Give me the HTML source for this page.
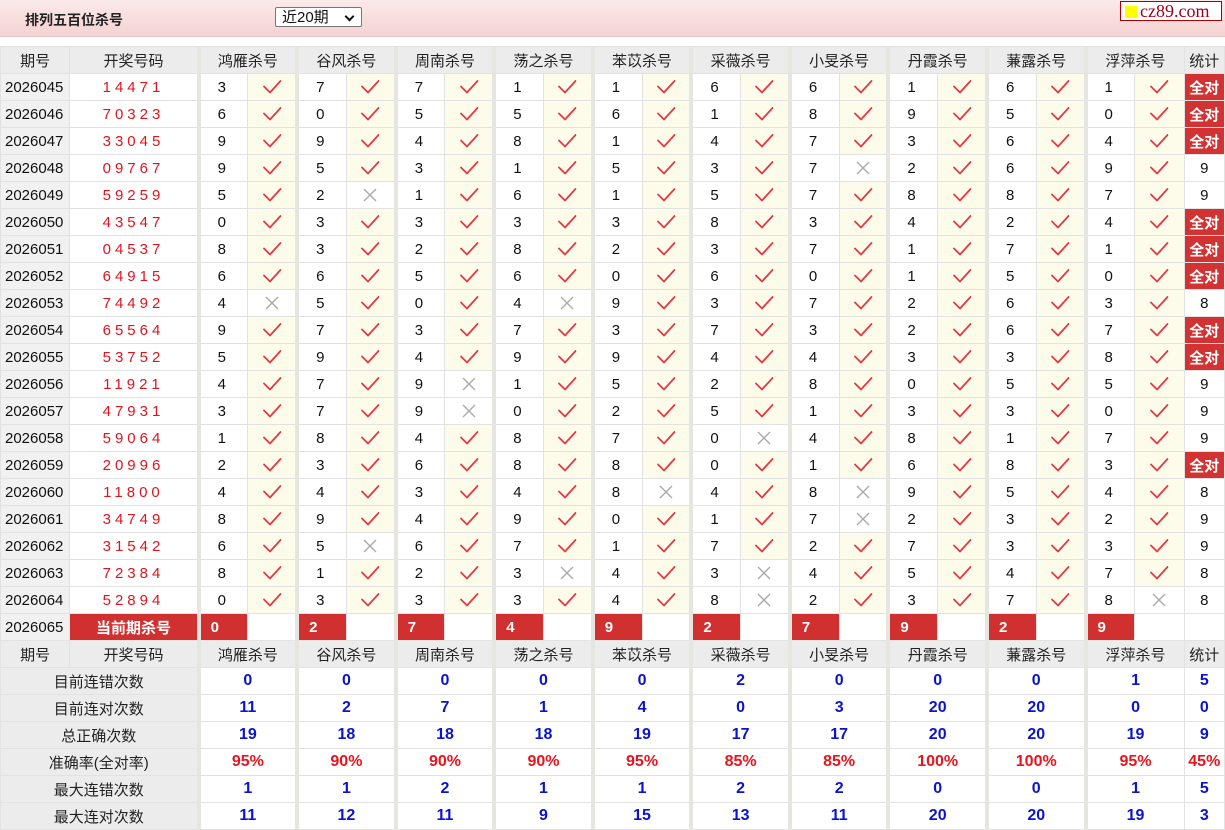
<!DOCTYPE html><html><head><meta charset="utf-8"><style>
body{margin:0;width:1225px;height:829px;overflow:hidden;background:#fff;font-family:"Liberation Sans","Noto Sans CJK SC",sans-serif;}
.top{position:absolute;left:0;top:0;width:1225px;height:36px;background:linear-gradient(#fbeaea,#f5d2d2);border-bottom:1px solid #e8c8c8;}
.title{position:absolute;left:25px;top:10px;font-size:14px;font-weight:bold;color:#222;}
.sel{position:absolute;left:275px;top:7px;width:87px;height:20px;border:1px solid #777;border-radius:2px;background:#fff;font-size:15px;line-height:20px;padding-left:6px;box-sizing:border-box;color:#111;}
.sel:after{content:"";position:absolute;right:8px;top:5px;width:5px;height:5px;border-right:2px solid #111;border-bottom:2px solid #111;transform:rotate(45deg);}
.logo{position:absolute;left:1120px;top:1px;width:102px;height:20px;border:1px solid #a00;background:#fff;box-sizing:border-box;font-family:"Liberation Serif",serif;font-size:18px;line-height:18px;color:#a00020;white-space:nowrap;overflow:hidden;}
.logo i{display:inline-block;width:12px;height:12px;background:#ff0;margin:0 3px 0 4px;vertical-align:-1px;}
table{position:absolute;left:0;top:46px;width:1225px;border-collapse:collapse;table-layout:fixed;}
td{height:26px;padding:0;border:1px solid #e2e2e2;text-align:center;font-size:15px;color:#111;white-space:nowrap;overflow:hidden;}
.h td{background:#ececec;color:#222;}
td.p{background:#f1f1f1;text-align:left;padding-left:4px;}
td.k{color:#e0141e;letter-spacing:4px;font-size:15px;}
td.n{border-left:4px solid #e6e6e0;text-align:left;padding-left:17px;}
.h td.n{text-align:center;padding-left:0;}
td.y{background:#fdfbea;}
td.w{background:#fff;}
svg{width:22px;height:18px;vertical-align:middle;}
td.q{background:#d23232;color:#fff;font-weight:bold;font-size:15px;}
td.c{background:#d03030;color:#fff;font-weight:bold;font-size:15px;}
td.cn{background:#d03030;color:#fff;font-weight:bold;text-align:left;padding-left:10px;border-left:4px solid #e6e6e0;}
td.L{background:#ececec;color:#222;}
td.b{color:#0a14d0;font-weight:bold;font-size:16px;border-left:4px solid #e6e6e0;}
td.r{color:#e8141e;font-weight:bold;font-size:16px;border-left:4px solid #e6e6e0;}
td.lb{color:#0a14d0;font-weight:bold;font-size:16px;}
td.lr{color:#e8141e;font-weight:bold;font-size:16px;}
</style></head><body>
<svg style="display:none" xmlns="http://www.w3.org/2000/svg"><symbol id="c" viewBox="0 0 22 18"><path d="M3 8.5 L9 14.5 L19.5 3" fill="none" stroke="#e23a44" stroke-width="1.8" stroke-linecap="round" stroke-linejoin="round"/></symbol><symbol id="x" viewBox="0 0 22 18"><path d="M5 3 L17 15 M17 3 L5 15" fill="none" stroke="#aaa" stroke-width="1.4"/></symbol></svg>
<div class="top"><div class="title">排列五百位杀号</div><div class="sel">近20期</div><div class="logo"><i></i>cz89.com</div></div>
<table>
<colgroup><col style="width:69px"><col style="width:128px"><col span="20" style="width:49px"><col style="width:40px"></colgroup>
<tr class="h"><td>期号</td><td>开奖号码</td><td class="n" colspan="2">鸿雁杀号</td><td class="n" colspan="2">谷风杀号</td><td class="n" colspan="2">周南杀号</td><td class="n" colspan="2">荡之杀号</td><td class="n" colspan="2">苯苡杀号</td><td class="n" colspan="2">采薇杀号</td><td class="n" colspan="2">小旻杀号</td><td class="n" colspan="2">丹霞杀号</td><td class="n" colspan="2">蒹露杀号</td><td class="n" colspan="2">浮萍杀号</td><td>统计</td></tr>
<tr><td class="p">2026045</td><td class="k">14471</td><td class="n">3</td><td class="y"><svg><use href="#c"/></svg></td><td class="n">7</td><td class="y"><svg><use href="#c"/></svg></td><td class="n">7</td><td class="y"><svg><use href="#c"/></svg></td><td class="n">1</td><td class="y"><svg><use href="#c"/></svg></td><td class="n">1</td><td class="y"><svg><use href="#c"/></svg></td><td class="n">6</td><td class="y"><svg><use href="#c"/></svg></td><td class="n">6</td><td class="y"><svg><use href="#c"/></svg></td><td class="n">1</td><td class="y"><svg><use href="#c"/></svg></td><td class="n">6</td><td class="y"><svg><use href="#c"/></svg></td><td class="n">1</td><td class="y"><svg><use href="#c"/></svg></td><td class="q">全对</td></tr>
<tr><td class="p">2026046</td><td class="k">70323</td><td class="n">6</td><td class="y"><svg><use href="#c"/></svg></td><td class="n">0</td><td class="y"><svg><use href="#c"/></svg></td><td class="n">5</td><td class="y"><svg><use href="#c"/></svg></td><td class="n">5</td><td class="y"><svg><use href="#c"/></svg></td><td class="n">6</td><td class="y"><svg><use href="#c"/></svg></td><td class="n">1</td><td class="y"><svg><use href="#c"/></svg></td><td class="n">8</td><td class="y"><svg><use href="#c"/></svg></td><td class="n">9</td><td class="y"><svg><use href="#c"/></svg></td><td class="n">5</td><td class="y"><svg><use href="#c"/></svg></td><td class="n">0</td><td class="y"><svg><use href="#c"/></svg></td><td class="q">全对</td></tr>
<tr><td class="p">2026047</td><td class="k">33045</td><td class="n">9</td><td class="y"><svg><use href="#c"/></svg></td><td class="n">9</td><td class="y"><svg><use href="#c"/></svg></td><td class="n">4</td><td class="y"><svg><use href="#c"/></svg></td><td class="n">8</td><td class="y"><svg><use href="#c"/></svg></td><td class="n">1</td><td class="y"><svg><use href="#c"/></svg></td><td class="n">4</td><td class="y"><svg><use href="#c"/></svg></td><td class="n">7</td><td class="y"><svg><use href="#c"/></svg></td><td class="n">3</td><td class="y"><svg><use href="#c"/></svg></td><td class="n">6</td><td class="y"><svg><use href="#c"/></svg></td><td class="n">4</td><td class="y"><svg><use href="#c"/></svg></td><td class="q">全对</td></tr>
<tr><td class="p">2026048</td><td class="k">09767</td><td class="n">9</td><td class="y"><svg><use href="#c"/></svg></td><td class="n">5</td><td class="y"><svg><use href="#c"/></svg></td><td class="n">3</td><td class="y"><svg><use href="#c"/></svg></td><td class="n">1</td><td class="y"><svg><use href="#c"/></svg></td><td class="n">5</td><td class="y"><svg><use href="#c"/></svg></td><td class="n">3</td><td class="y"><svg><use href="#c"/></svg></td><td class="n">7</td><td class="w"><svg><use href="#x"/></svg></td><td class="n">2</td><td class="y"><svg><use href="#c"/></svg></td><td class="n">6</td><td class="y"><svg><use href="#c"/></svg></td><td class="n">9</td><td class="y"><svg><use href="#c"/></svg></td><td>9</td></tr>
<tr><td class="p">2026049</td><td class="k">59259</td><td class="n">5</td><td class="y"><svg><use href="#c"/></svg></td><td class="n">2</td><td class="w"><svg><use href="#x"/></svg></td><td class="n">1</td><td class="y"><svg><use href="#c"/></svg></td><td class="n">6</td><td class="y"><svg><use href="#c"/></svg></td><td class="n">1</td><td class="y"><svg><use href="#c"/></svg></td><td class="n">5</td><td class="y"><svg><use href="#c"/></svg></td><td class="n">7</td><td class="y"><svg><use href="#c"/></svg></td><td class="n">8</td><td class="y"><svg><use href="#c"/></svg></td><td class="n">8</td><td class="y"><svg><use href="#c"/></svg></td><td class="n">7</td><td class="y"><svg><use href="#c"/></svg></td><td>9</td></tr>
<tr><td class="p">2026050</td><td class="k">43547</td><td class="n">0</td><td class="y"><svg><use href="#c"/></svg></td><td class="n">3</td><td class="y"><svg><use href="#c"/></svg></td><td class="n">3</td><td class="y"><svg><use href="#c"/></svg></td><td class="n">3</td><td class="y"><svg><use href="#c"/></svg></td><td class="n">3</td><td class="y"><svg><use href="#c"/></svg></td><td class="n">8</td><td class="y"><svg><use href="#c"/></svg></td><td class="n">3</td><td class="y"><svg><use href="#c"/></svg></td><td class="n">4</td><td class="y"><svg><use href="#c"/></svg></td><td class="n">2</td><td class="y"><svg><use href="#c"/></svg></td><td class="n">4</td><td class="y"><svg><use href="#c"/></svg></td><td class="q">全对</td></tr>
<tr><td class="p">2026051</td><td class="k">04537</td><td class="n">8</td><td class="y"><svg><use href="#c"/></svg></td><td class="n">3</td><td class="y"><svg><use href="#c"/></svg></td><td class="n">2</td><td class="y"><svg><use href="#c"/></svg></td><td class="n">8</td><td class="y"><svg><use href="#c"/></svg></td><td class="n">2</td><td class="y"><svg><use href="#c"/></svg></td><td class="n">3</td><td class="y"><svg><use href="#c"/></svg></td><td class="n">7</td><td class="y"><svg><use href="#c"/></svg></td><td class="n">1</td><td class="y"><svg><use href="#c"/></svg></td><td class="n">7</td><td class="y"><svg><use href="#c"/></svg></td><td class="n">1</td><td class="y"><svg><use href="#c"/></svg></td><td class="q">全对</td></tr>
<tr><td class="p">2026052</td><td class="k">64915</td><td class="n">6</td><td class="y"><svg><use href="#c"/></svg></td><td class="n">6</td><td class="y"><svg><use href="#c"/></svg></td><td class="n">5</td><td class="y"><svg><use href="#c"/></svg></td><td class="n">6</td><td class="y"><svg><use href="#c"/></svg></td><td class="n">0</td><td class="y"><svg><use href="#c"/></svg></td><td class="n">6</td><td class="y"><svg><use href="#c"/></svg></td><td class="n">0</td><td class="y"><svg><use href="#c"/></svg></td><td class="n">1</td><td class="y"><svg><use href="#c"/></svg></td><td class="n">5</td><td class="y"><svg><use href="#c"/></svg></td><td class="n">0</td><td class="y"><svg><use href="#c"/></svg></td><td class="q">全对</td></tr>
<tr><td class="p">2026053</td><td class="k">74492</td><td class="n">4</td><td class="w"><svg><use href="#x"/></svg></td><td class="n">5</td><td class="y"><svg><use href="#c"/></svg></td><td class="n">0</td><td class="y"><svg><use href="#c"/></svg></td><td class="n">4</td><td class="w"><svg><use href="#x"/></svg></td><td class="n">9</td><td class="y"><svg><use href="#c"/></svg></td><td class="n">3</td><td class="y"><svg><use href="#c"/></svg></td><td class="n">7</td><td class="y"><svg><use href="#c"/></svg></td><td class="n">2</td><td class="y"><svg><use href="#c"/></svg></td><td class="n">6</td><td class="y"><svg><use href="#c"/></svg></td><td class="n">3</td><td class="y"><svg><use href="#c"/></svg></td><td>8</td></tr>
<tr><td class="p">2026054</td><td class="k">65564</td><td class="n">9</td><td class="y"><svg><use href="#c"/></svg></td><td class="n">7</td><td class="y"><svg><use href="#c"/></svg></td><td class="n">3</td><td class="y"><svg><use href="#c"/></svg></td><td class="n">7</td><td class="y"><svg><use href="#c"/></svg></td><td class="n">3</td><td class="y"><svg><use href="#c"/></svg></td><td class="n">7</td><td class="y"><svg><use href="#c"/></svg></td><td class="n">3</td><td class="y"><svg><use href="#c"/></svg></td><td class="n">2</td><td class="y"><svg><use href="#c"/></svg></td><td class="n">6</td><td class="y"><svg><use href="#c"/></svg></td><td class="n">7</td><td class="y"><svg><use href="#c"/></svg></td><td class="q">全对</td></tr>
<tr><td class="p">2026055</td><td class="k">53752</td><td class="n">5</td><td class="y"><svg><use href="#c"/></svg></td><td class="n">9</td><td class="y"><svg><use href="#c"/></svg></td><td class="n">4</td><td class="y"><svg><use href="#c"/></svg></td><td class="n">9</td><td class="y"><svg><use href="#c"/></svg></td><td class="n">9</td><td class="y"><svg><use href="#c"/></svg></td><td class="n">4</td><td class="y"><svg><use href="#c"/></svg></td><td class="n">4</td><td class="y"><svg><use href="#c"/></svg></td><td class="n">3</td><td class="y"><svg><use href="#c"/></svg></td><td class="n">3</td><td class="y"><svg><use href="#c"/></svg></td><td class="n">8</td><td class="y"><svg><use href="#c"/></svg></td><td class="q">全对</td></tr>
<tr><td class="p">2026056</td><td class="k">11921</td><td class="n">4</td><td class="y"><svg><use href="#c"/></svg></td><td class="n">7</td><td class="y"><svg><use href="#c"/></svg></td><td class="n">9</td><td class="w"><svg><use href="#x"/></svg></td><td class="n">1</td><td class="y"><svg><use href="#c"/></svg></td><td class="n">5</td><td class="y"><svg><use href="#c"/></svg></td><td class="n">2</td><td class="y"><svg><use href="#c"/></svg></td><td class="n">8</td><td class="y"><svg><use href="#c"/></svg></td><td class="n">0</td><td class="y"><svg><use href="#c"/></svg></td><td class="n">5</td><td class="y"><svg><use href="#c"/></svg></td><td class="n">5</td><td class="y"><svg><use href="#c"/></svg></td><td>9</td></tr>
<tr><td class="p">2026057</td><td class="k">47931</td><td class="n">3</td><td class="y"><svg><use href="#c"/></svg></td><td class="n">7</td><td class="y"><svg><use href="#c"/></svg></td><td class="n">9</td><td class="w"><svg><use href="#x"/></svg></td><td class="n">0</td><td class="y"><svg><use href="#c"/></svg></td><td class="n">2</td><td class="y"><svg><use href="#c"/></svg></td><td class="n">5</td><td class="y"><svg><use href="#c"/></svg></td><td class="n">1</td><td class="y"><svg><use href="#c"/></svg></td><td class="n">3</td><td class="y"><svg><use href="#c"/></svg></td><td class="n">3</td><td class="y"><svg><use href="#c"/></svg></td><td class="n">0</td><td class="y"><svg><use href="#c"/></svg></td><td>9</td></tr>
<tr><td class="p">2026058</td><td class="k">59064</td><td class="n">1</td><td class="y"><svg><use href="#c"/></svg></td><td class="n">8</td><td class="y"><svg><use href="#c"/></svg></td><td class="n">4</td><td class="y"><svg><use href="#c"/></svg></td><td class="n">8</td><td class="y"><svg><use href="#c"/></svg></td><td class="n">7</td><td class="y"><svg><use href="#c"/></svg></td><td class="n">0</td><td class="w"><svg><use href="#x"/></svg></td><td class="n">4</td><td class="y"><svg><use href="#c"/></svg></td><td class="n">8</td><td class="y"><svg><use href="#c"/></svg></td><td class="n">1</td><td class="y"><svg><use href="#c"/></svg></td><td class="n">7</td><td class="y"><svg><use href="#c"/></svg></td><td>9</td></tr>
<tr><td class="p">2026059</td><td class="k">20996</td><td class="n">2</td><td class="y"><svg><use href="#c"/></svg></td><td class="n">3</td><td class="y"><svg><use href="#c"/></svg></td><td class="n">6</td><td class="y"><svg><use href="#c"/></svg></td><td class="n">8</td><td class="y"><svg><use href="#c"/></svg></td><td class="n">8</td><td class="y"><svg><use href="#c"/></svg></td><td class="n">0</td><td class="y"><svg><use href="#c"/></svg></td><td class="n">1</td><td class="y"><svg><use href="#c"/></svg></td><td class="n">6</td><td class="y"><svg><use href="#c"/></svg></td><td class="n">8</td><td class="y"><svg><use href="#c"/></svg></td><td class="n">3</td><td class="y"><svg><use href="#c"/></svg></td><td class="q">全对</td></tr>
<tr><td class="p">2026060</td><td class="k">11800</td><td class="n">4</td><td class="y"><svg><use href="#c"/></svg></td><td class="n">4</td><td class="y"><svg><use href="#c"/></svg></td><td class="n">3</td><td class="y"><svg><use href="#c"/></svg></td><td class="n">4</td><td class="y"><svg><use href="#c"/></svg></td><td class="n">8</td><td class="w"><svg><use href="#x"/></svg></td><td class="n">4</td><td class="y"><svg><use href="#c"/></svg></td><td class="n">8</td><td class="w"><svg><use href="#x"/></svg></td><td class="n">9</td><td class="y"><svg><use href="#c"/></svg></td><td class="n">5</td><td class="y"><svg><use href="#c"/></svg></td><td class="n">4</td><td class="y"><svg><use href="#c"/></svg></td><td>8</td></tr>
<tr><td class="p">2026061</td><td class="k">34749</td><td class="n">8</td><td class="y"><svg><use href="#c"/></svg></td><td class="n">9</td><td class="y"><svg><use href="#c"/></svg></td><td class="n">4</td><td class="y"><svg><use href="#c"/></svg></td><td class="n">9</td><td class="y"><svg><use href="#c"/></svg></td><td class="n">0</td><td class="y"><svg><use href="#c"/></svg></td><td class="n">1</td><td class="y"><svg><use href="#c"/></svg></td><td class="n">7</td><td class="w"><svg><use href="#x"/></svg></td><td class="n">2</td><td class="y"><svg><use href="#c"/></svg></td><td class="n">3</td><td class="y"><svg><use href="#c"/></svg></td><td class="n">2</td><td class="y"><svg><use href="#c"/></svg></td><td>9</td></tr>
<tr><td class="p">2026062</td><td class="k">31542</td><td class="n">6</td><td class="y"><svg><use href="#c"/></svg></td><td class="n">5</td><td class="w"><svg><use href="#x"/></svg></td><td class="n">6</td><td class="y"><svg><use href="#c"/></svg></td><td class="n">7</td><td class="y"><svg><use href="#c"/></svg></td><td class="n">1</td><td class="y"><svg><use href="#c"/></svg></td><td class="n">7</td><td class="y"><svg><use href="#c"/></svg></td><td class="n">2</td><td class="y"><svg><use href="#c"/></svg></td><td class="n">7</td><td class="y"><svg><use href="#c"/></svg></td><td class="n">3</td><td class="y"><svg><use href="#c"/></svg></td><td class="n">3</td><td class="y"><svg><use href="#c"/></svg></td><td>9</td></tr>
<tr><td class="p">2026063</td><td class="k">72384</td><td class="n">8</td><td class="y"><svg><use href="#c"/></svg></td><td class="n">1</td><td class="y"><svg><use href="#c"/></svg></td><td class="n">2</td><td class="y"><svg><use href="#c"/></svg></td><td class="n">3</td><td class="w"><svg><use href="#x"/></svg></td><td class="n">4</td><td class="y"><svg><use href="#c"/></svg></td><td class="n">3</td><td class="w"><svg><use href="#x"/></svg></td><td class="n">4</td><td class="y"><svg><use href="#c"/></svg></td><td class="n">5</td><td class="y"><svg><use href="#c"/></svg></td><td class="n">4</td><td class="y"><svg><use href="#c"/></svg></td><td class="n">7</td><td class="y"><svg><use href="#c"/></svg></td><td>8</td></tr>
<tr><td class="p">2026064</td><td class="k">52894</td><td class="n">0</td><td class="y"><svg><use href="#c"/></svg></td><td class="n">3</td><td class="y"><svg><use href="#c"/></svg></td><td class="n">3</td><td class="y"><svg><use href="#c"/></svg></td><td class="n">3</td><td class="y"><svg><use href="#c"/></svg></td><td class="n">4</td><td class="y"><svg><use href="#c"/></svg></td><td class="n">8</td><td class="w"><svg><use href="#x"/></svg></td><td class="n">2</td><td class="y"><svg><use href="#c"/></svg></td><td class="n">3</td><td class="y"><svg><use href="#c"/></svg></td><td class="n">7</td><td class="y"><svg><use href="#c"/></svg></td><td class="n">8</td><td class="w"><svg><use href="#x"/></svg></td><td>8</td></tr>
<tr><td class="p">2026065</td><td class="c">当前期杀号</td><td class="cn">0</td><td></td><td class="cn">2</td><td></td><td class="cn">7</td><td></td><td class="cn">4</td><td></td><td class="cn">9</td><td></td><td class="cn">2</td><td></td><td class="cn">7</td><td></td><td class="cn">9</td><td></td><td class="cn">2</td><td></td><td class="cn">9</td><td></td><td></td></tr>
<tr class="h"><td>期号</td><td>开奖号码</td><td class="n" colspan="2">鸿雁杀号</td><td class="n" colspan="2">谷风杀号</td><td class="n" colspan="2">周南杀号</td><td class="n" colspan="2">荡之杀号</td><td class="n" colspan="2">苯苡杀号</td><td class="n" colspan="2">采薇杀号</td><td class="n" colspan="2">小旻杀号</td><td class="n" colspan="2">丹霞杀号</td><td class="n" colspan="2">蒹露杀号</td><td class="n" colspan="2">浮萍杀号</td><td>统计</td></tr>
<tr><td class="L" colspan="2">目前连错次数</td><td class="b" colspan="2">0</td><td class="b" colspan="2">0</td><td class="b" colspan="2">0</td><td class="b" colspan="2">0</td><td class="b" colspan="2">0</td><td class="b" colspan="2">2</td><td class="b" colspan="2">0</td><td class="b" colspan="2">0</td><td class="b" colspan="2">0</td><td class="b" colspan="2">1</td><td class="lb">5</td></tr>
<tr><td class="L" colspan="2">目前连对次数</td><td class="b" colspan="2">11</td><td class="b" colspan="2">2</td><td class="b" colspan="2">7</td><td class="b" colspan="2">1</td><td class="b" colspan="2">4</td><td class="b" colspan="2">0</td><td class="b" colspan="2">3</td><td class="b" colspan="2">20</td><td class="b" colspan="2">20</td><td class="b" colspan="2">0</td><td class="lb">0</td></tr>
<tr><td class="L" colspan="2">总正确次数</td><td class="b" colspan="2">19</td><td class="b" colspan="2">18</td><td class="b" colspan="2">18</td><td class="b" colspan="2">18</td><td class="b" colspan="2">19</td><td class="b" colspan="2">17</td><td class="b" colspan="2">17</td><td class="b" colspan="2">20</td><td class="b" colspan="2">20</td><td class="b" colspan="2">19</td><td class="lb">9</td></tr>
<tr><td class="L" colspan="2">准确率(全对率)</td><td class="r" colspan="2">95%</td><td class="r" colspan="2">90%</td><td class="r" colspan="2">90%</td><td class="r" colspan="2">90%</td><td class="r" colspan="2">95%</td><td class="r" colspan="2">85%</td><td class="r" colspan="2">85%</td><td class="r" colspan="2">100%</td><td class="r" colspan="2">100%</td><td class="r" colspan="2">95%</td><td class="lr">45%</td></tr>
<tr><td class="L" colspan="2">最大连错次数</td><td class="b" colspan="2">1</td><td class="b" colspan="2">1</td><td class="b" colspan="2">2</td><td class="b" colspan="2">1</td><td class="b" colspan="2">1</td><td class="b" colspan="2">2</td><td class="b" colspan="2">2</td><td class="b" colspan="2">0</td><td class="b" colspan="2">0</td><td class="b" colspan="2">1</td><td class="lb">5</td></tr>
<tr><td class="L" colspan="2">最大连对次数</td><td class="b" colspan="2">11</td><td class="b" colspan="2">12</td><td class="b" colspan="2">11</td><td class="b" colspan="2">9</td><td class="b" colspan="2">15</td><td class="b" colspan="2">13</td><td class="b" colspan="2">11</td><td class="b" colspan="2">20</td><td class="b" colspan="2">20</td><td class="b" colspan="2">19</td><td class="lb">3</td></tr>
</table>
</body></html>
